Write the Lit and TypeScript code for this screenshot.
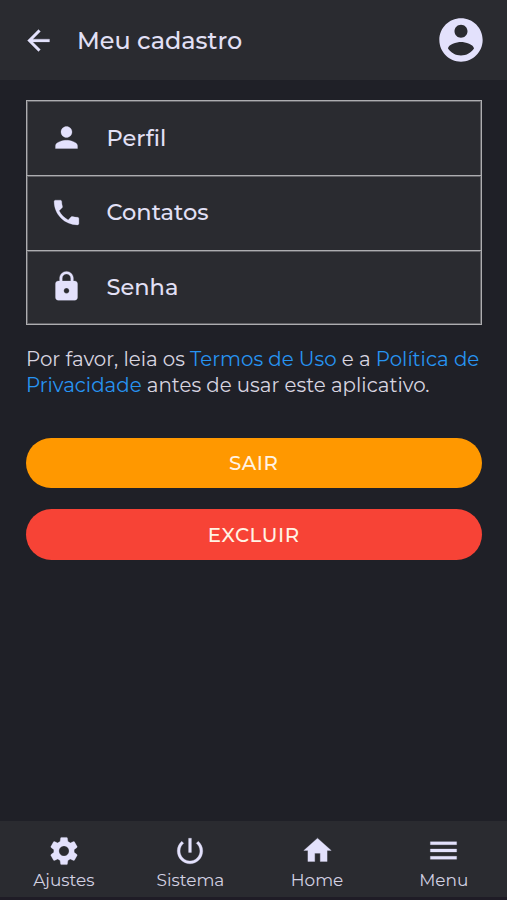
import { LitElement, html, css, svg } from "lit";
import { customElement } from "lit/decorators.js";

const icons = {
  back: "M20 11H7.83l5.59-5.59L12 4l-8 8 8 8 1.41-1.41L7.83 13H20v-2z",
  account:
    "M12 2C6.48 2 2 6.48 2 12s4.48 10 10 10 10-4.48 10-10S17.52 2 12 2zm0 3c1.66 0 3 1.34 3 3s-1.34 3-3 3-3-1.34-3-3 1.34-3 3-3zm0 14.2c-2.5 0-4.71-1.28-6-3.22.03-1.99 4-3.08 6-3.08 1.99 0 5.97 1.09 6 3.08-1.29 1.94-3.5 3.22-6 3.22z",
  person:
    "M12 12c2.21 0 4-1.79 4-4s-1.79-4-4-4-4 1.79-4 4 1.79 4 4 4zm0 2c-2.67 0-8 1.34-8 4v2h16v-2c0-2.66-5.33-4-8-4z",
  phone:
    "M6.62 10.79c1.44 2.83 3.76 5.14 6.59 6.59l2.2-2.2c.27-.27.67-.36 1.02-.24 1.12.37 2.33.57 3.57.57.55 0 1 .45 1 1V20c0 .55-.45 1-1 1-9.39 0-17-7.61-17-17 0-.55.45-1 1-1h3.5c.55 0 1 .45 1 1 0 1.25.2 2.45.57 3.57.11.35.03.74-.25 1.02l-2.2 2.2z",
  lock: "M18 8h-1V6c0-2.76-2.24-5-5-5S7 3.24 7 6v2H6c-1.1 0-2 .9-2 2v10c0 1.1.9 2 2 2h12c1.1 0 2-.9 2-2V10c0-1.1-.9-2-2-2zm-6 9c-1.1 0-2-.9-2-2s.9-2 2-2 2 .9 2 2-.9 2-2 2zm3.1-9H8.9V6c0-1.71 1.39-3.1 3.1-3.1 1.71 0 3.1 1.39 3.1 3.1v2z",
  settings:
    "M19.14 12.94c.04-.3.06-.61.06-.94 0-.32-.02-.64-.07-.94l2.03-1.58c.18-.14.23-.41.12-.61l-1.92-3.32c-.12-.22-.37-.29-.59-.22l-2.39.96c-.5-.38-1.03-.7-1.62-.94l-.36-2.54c-.04-.24-.24-.41-.48-.41h-3.84c-.24 0-.43.17-.47.41l-.36 2.54c-.59.24-1.13.57-1.62.94l-2.39-.96c-.22-.08-.47 0-.59.22L2.74 8.87c-.12.21-.08.47.12.61l2.03 1.58c-.05.3-.09.63-.09.94s.02.64.07.94l-2.03 1.58c-.18.14-.23.41-.12.61l1.92 3.32c.12.22.37.29.59.22l2.39-.96c.5.38 1.03.7 1.62.94l.36 2.54c.05.24.24.41.48.41h3.84c.24 0 .44-.17.47-.41l.36-2.54c.59-.24 1.13-.56 1.62-.94l2.39.96c.22.08.47 0 .59-.22l1.92-3.32c.12-.22.07-.47-.12-.61l-2.01-1.58zM12 15.6c-1.98 0-3.6-1.62-3.6-3.6s1.62-3.6 3.6-3.6 3.6 1.62 3.6 3.6-1.62 3.6-3.6 3.6z",
  power:
    "M13 3h-2v10h2V3zm4.83 2.17l-1.42 1.42C17.99 7.86 19 9.81 19 12c0 3.87-3.13 7-7 7s-7-3.13-7-7c0-2.19 1.01-4.14 2.58-5.42L6.17 5.17C4.23 6.82 3 9.26 3 12c0 4.97 4.03 9 9 9s9-4.03 9-9c0-2.74-1.23-5.18-3.17-6.83z",
  home: "M10 20v-6h4v6h5v-8h3L12 3 2 12h3v8z",
  menu: "M3 18h18v-2H3v2zm0-5h18v-2H3v2zm0-7v2h18V6H3z",
};

const icon = (name: keyof typeof icons) =>
  html`<svg class="icon ${name}" viewBox="0 0 24 24" aria-hidden="true">${svg`<path d=${icons[name]}></path>`}</svg>`;

@customElement("app-root")
export class AppRoot extends LitElement {
  static styles = css`
    :host {
      display: flex;
      flex-direction: column;
      box-sizing: border-box;
      height: 900px;
      background: #1f2027;
      color: #e2e0f6;
      font-family: Montserrat, Inter, sans-serif;
    }
    .icon {
      display: block;
      width: 33px;
      height: 33px;
      fill: #e3e1fc;
      stroke: #e3e1fc;
      stroke-width: 0.2;
      flex: none;
    }
    .icon.account { width: 52px; height: 52px; margin-left: auto; stroke: none; }
    .icon.settings, .icon.power { width: 34px; height: 34px; }
    .icon.menu { width: 35px; height: 35px; }
    header {
      display: flex;
      align-items: center;
      height: 80px;
      box-sizing: border-box;
      padding: 0 20.5px 0 22px;
      background: #2a2b30;
    }
    h1 { margin: 0 0 0 22px; font-size: 23.9px; font-weight: 500; }
    main { flex: 1; padding: 20px 25.5px 0 26px; }
    .list {
      display: grid;
      grid-template-rows: repeat(3, 1fr);
      box-sizing: border-box;
      height: 225px;
      border: 1px solid #adadb0;
      background: #2a2b30;
      box-shadow: inset 0 0 0 1px #606065;
    }
    .row {
      display: flex;
      align-items: center;
      gap: 23.5px;
      padding: 0 0 1px 23px;
      font-size: 22.5px;
      font-weight: 500;
    }
    .row + .row { border-top: 1px solid #adadb0; box-shadow: inset 0 1px #606065; }
    .terms {
      margin: 22.4px -4px 0 0;
      font-size: 19.8px;
      line-height: 25.2px;
      color: #d8d5e0;
    }
    .terms a { color: #2794f2; }
    .actions { display: grid; gap: 21px; margin-top: 40.2px; }
    button {
      height: 50.5px;
      padding: 0;
      border: 0;
      border-radius: 26px;
      background: #ff9800;
      color: #fff3e4;
      font: 500 19.8px Montserrat, Inter, sans-serif;
      letter-spacing: 0.6px;
    }
    button.danger { background: #f74336; }
    nav {
      display: grid;
      grid-template-columns: repeat(4, 1fr);
      height: 79px;
      box-sizing: border-box;
      padding-left: 0.5px;
      background: #2a2b30;
      border-bottom: 3px solid #1f1c26;
    }
    .tab {
      display: flex;
      flex-direction: column;
      align-items: center;
      font-size: 16.9px;
      color: #d3d1e2;
    }
    .glyph { height: 35px; margin-top: 12px; display: flex; align-items: center; }
    .label { line-height: 22px; margin-top: 1px; }
  `;

  render() {
    return html`
      <header>${icon("back")}<h1>Meu cadastro</h1>${icon("account")}</header>
      <main>
        <div class="list">
          <div class="row">${icon("person")}<span>Perfil</span></div>
          <div class="row">${icon("phone")}<span>Contatos</span></div>
          <div class="row">${icon("lock")}<span>Senha</span></div>
        </div>
        <p class="terms">
          Por favor, leia os <a>Termos de Uso</a> e a <a>Política de<br />Privacidade</a> antes de usar este aplicativo.
        </p>
        <div class="actions">
          <button>SAIR</button>
          <button class="danger">EXCLUIR</button>
        </div>
      </main>
      <nav>
        <div class="tab"><div class="glyph">${icon("settings")}</div><span class="label">Ajustes</span></div>
        <div class="tab"><div class="glyph">${icon("power")}</div><span class="label">Sistema</span></div>
        <div class="tab"><div class="glyph">${icon("home")}</div><span class="label">Home</span></div>
        <div class="tab"><div class="glyph">${icon("menu")}</div><span class="label">Menu</span></div>
      </nav>
    `;
  }
}
